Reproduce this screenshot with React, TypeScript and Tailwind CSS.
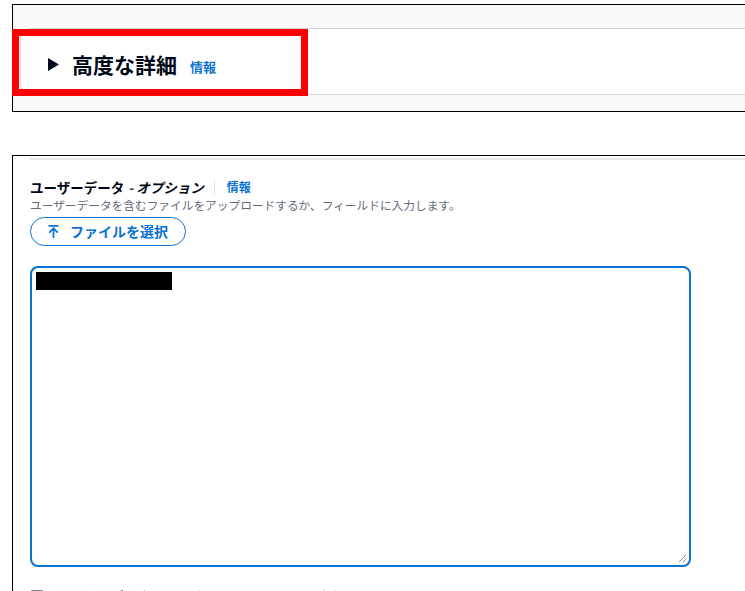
import { ArrowUpToLine } from 'lucide-react';

const font = { fontFamily: '"Noto Sans CJK JP", "Noto Sans", sans-serif' };

function InfoLink({ className = '' }: { className?: string }) {
  return <span className={`font-bold text-[#0972d3] ${className}`}>情報</span>;
}

function AdvancedPanel() {
  return (
    <div className="relative">
      <div className="ml-[12px] mt-[4px] h-[108px] border-y border-l border-black bg-[#fafafa] pt-[23px] pl-[7px]">
        <div className="flex h-[67px] items-center rounded-l-[12px] border-y border-l border-[#d1d5db] bg-white pl-[27px] pt-[6px]">
          <svg width="11" height="13" viewBox="0 0 11 13" className="mr-[13px]">
            <path d="M0 0 L11 6.5 L0 13 Z" fill="#000716" />
          </svg>
          <span className="text-[21px] font-bold leading-none text-[#000716]">高度な詳細</span>
          <InfoLink className="ml-[13px] mt-[4px] text-[13px] leading-none" />
        </div>
      </div>
      {/* annotation frame */}
      <div className="absolute left-[12px] top-[25px] h-[67px] w-[296px] border-[7px] border-[#ff0000]" />
    </div>
  );
}

function UserDataPanel() {
  return (
    <div className="ml-[12px] mt-[43px] border-l border-t border-black pt-[2px]">
      <div className="ml-[17px] h-[2px] bg-[#e5e7eb]" />
      <div className="pl-[17px] pt-[17px]">
        <div className="flex h-[20px] items-center text-[13.5px] text-[#000716]">
          <span className="font-bold">ユーザーデータ</span>
          <span className="ml-[4px] font-bold italic">- オプション</span>
          <span className="ml-[10px] mr-[12px] h-[15px] w-px bg-[#e0e3e7]" />
          <InfoLink className="text-[12px]" />
        </div>
        <div className="h-[16px] text-[11.7px] leading-[16px] text-[#5f6b7a]">
          ユーザーデータを含むファイルをアップロードするか、フィールドに入力します。
        </div>
        <button className="mt-[4px] flex h-[29px] w-[156px] items-center rounded-full border-[1.5px] border-[#0972d3] pl-[15px] text-[14px] font-bold text-[#0972d3]">
          <ArrowUpToLine size={15} strokeWidth={2.75} className="mr-[9px]" />
          ファイルを選択
        </button>
        <div className="relative mt-[20px] h-[301px] w-[661px] rounded-[8px] border-2 border-[#0972d3] bg-white p-[4px]">
          <div className="h-[18px] w-[136px] bg-black" />
          <svg width="10" height="10" viewBox="0 0 10 10" className="absolute bottom-[2px] right-[2px]">
            <path d="M9 2 L2 9 M9 6 L6 9" stroke="#8a8a8a" strokeWidth="1" />
          </svg>
        </div>
        <div className="mt-[19px] flex items-center text-[14px] text-[#000716]">
          <span className="mr-[10px] h-[14px] w-[14px] rounded-[3px] border-2 border-[#7d8998]" />
          ユーザーデータは既に base64 エンコードされています
        </div>
      </div>
    </div>
  );
}

export default function App() {
  return (
    <div className="h-[591px] w-[745px] overflow-hidden bg-white" style={font}>
      <AdvancedPanel />
      <UserDataPanel />
    </div>
  );
}
